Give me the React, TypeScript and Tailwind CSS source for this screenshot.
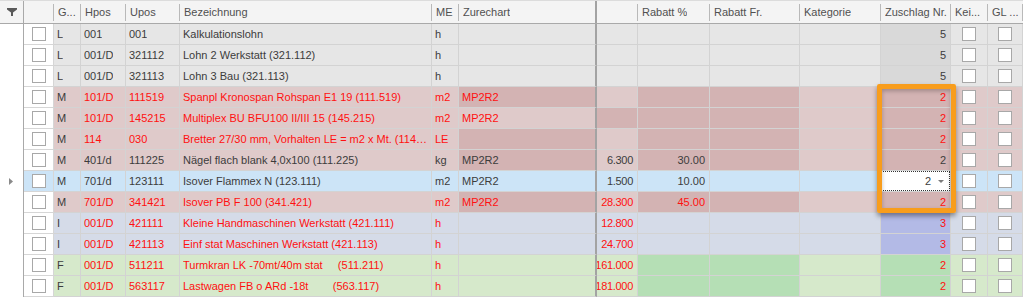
import React from 'react';

type Kind = 'gray' | 'red' | 'sel' | 'lav' | 'green';
type Key = 'g' | 'hpos' | 'upos' | 'bez' | 'me' | 'zur' | 'num' | 'rab' | 'rabfr' | 'kat' | 'zus' | 'kei' | 'gl';

interface Row {
  kind: Kind;
  red?: boolean;
  g: string;
  hpos: string;
  upos: string;
  bez: string;
  me: string;
  zur?: string;
  num?: string;
  rab?: string;
  zus: string;
  dark?: Key[];
  current?: boolean;
}

const columns: { key: Key; label: string; w: string; right?: boolean; check?: boolean }[] = [
  { key: 'g', label: 'G...', w: 'w-[27px]' },
  { key: 'hpos', label: 'Hpos', w: 'w-[45px]' },
  { key: 'upos', label: 'Upos', w: 'w-[54px]' },
  { key: 'bez', label: 'Bezeichnung', w: 'w-[252px]' },
  { key: 'me', label: 'ME', w: 'w-[27px]' },
  { key: 'zur', label: 'Zurechart', w: 'w-[138px]' },
  { key: 'num', label: '', w: 'w-[41px]', right: true },
  { key: 'rab', label: 'Rabatt %', w: 'w-[72px]', right: true },
  { key: 'rabfr', label: 'Rabatt Fr.', w: 'w-[90px]', right: true },
  { key: 'kat', label: 'Kategorie', w: 'w-[81px]' },
  { key: 'zus', label: 'Zuschlag Nr.', w: 'w-[70px]', right: true },
  { key: 'kei', label: 'Kei...', w: 'w-[37px]', check: true },
  { key: 'gl', label: 'GL ...', w: 'w-[35px]', check: true },
];

const palette: Record<Kind, { base: string; dark: string }> = {
  gray: { base: 'bg-[#e6e6e6]', dark: 'bg-[#d9d9d9]' },
  red: { base: 'bg-[#dfcaca]', dark: 'bg-[#d3b3b3]' },
  sel: { base: 'bg-[#cce4f7]', dark: 'bg-[#cce4f7]' },
  lav: { base: 'bg-[#d5dbe8]', dark: 'bg-[#b3bae6]' },
  green: { base: 'bg-[#d6e9cb]', dark: 'bg-[#b5dfb5]' },
};

const defaultDark: Record<Kind, Key[]> = {
  gray: ['zus'],
  red: ['zur', 'rab', 'rabfr', 'zus'],
  sel: [],
  lav: ['zus'],
  green: ['rab', 'rabfr', 'zus'],
};

const rows: Row[] = [
  { kind: 'gray', g: 'L', hpos: '001', upos: '001', bez: 'Kalkulationslohn', me: 'h', zus: '5' },
  { kind: 'gray', g: 'L', hpos: '001/D', upos: '321112', bez: 'Lohn 2 Werkstatt (321.112)', me: 'h', zus: '5' },
  { kind: 'gray', g: 'L', hpos: '001/D', upos: '321113', bez: 'Lohn 3 Bau (321.113)', me: 'h', zus: '5' },
  { kind: 'red', red: true, g: 'M', hpos: '101/D', upos: '111519', bez: 'Spanpl Kronospan Rohspan E1 19 (111.519)', me: 'm2', zur: 'MP2R2', zus: '2' },
  {
    kind: 'red', red: true, g: 'M', hpos: '101/D', upos: '145215', bez: 'Multiplex BU BFU100 II/III 15 (145.215)', me: 'm2', zur: 'MP2R2', zus: '2',
    dark: ['num', 'rab', 'rabfr', 'zus'],
  },
  { kind: 'red', red: true, g: 'M', hpos: '114', upos: '030', bez: 'Bretter 27/30 mm, Vorhalten LE = m2 x Mt. (114.030)', me: 'LE', zus: '2' },
  { kind: 'red', g: 'M', hpos: '401/d', upos: '111225', bez: 'Nägel flach blank 4,0x100 (111.225)', me: 'kg', zur: 'MP2R2', num: '6.300', rab: '30.00', zus: '2' },
  { kind: 'sel', g: 'M', hpos: '701/d', upos: '123111', bez: 'Isover Flammex N (123.111)', me: 'm2', zur: 'MP2R2', num: '1.500', rab: '10.00', zus: '2', current: true },
  { kind: 'red', red: true, g: 'M', hpos: '701/D', upos: '341421', bez: 'Isover PB F 100 (341.421)', me: 'm2', zur: 'MP2R2', num: '28.300', rab: '45.00', zus: '2' },
  { kind: 'lav', red: true, g: 'I', hpos: '001/D', upos: '421111', bez: 'Kleine Handmaschinen Werkstatt (421.111)', me: 'h', num: '12.800', zus: '3' },
  { kind: 'lav', red: true, g: 'I', hpos: '001/D', upos: '421113', bez: 'Einf stat Maschinen Werkstatt (421.113)', me: 'h', num: '24.700', zus: '3' },
  { kind: 'green', red: true, g: 'F', hpos: '001/D', upos: '511211', bez: 'Turmkran LK -70mt/40m stat     (511.211)', me: 'h', num: '161.000', zus: '2' },
  { kind: 'green', red: true, g: 'F', hpos: '001/D', upos: '563117', bez: 'Lastwagen FB o ARd -18t        (563.117)', me: 'h', num: '181.000', zus: '2' },
];

function Check() {
  return <span className="block w-[14px] h-[14px] border border-[#a8a8a8] bg-white" />;
}

function FilterIcon() {
  return (
    <svg width="10" height="8" viewBox="0 0 10 8" className="block">
      <path d="M0 0H10V1.5L6 4.5V8H4V4.5L0 1.5Z" fill="#595959" />
    </svg>
  );
}

function HeaderCell({ label, w, thick }: { label: string; w: string; thick?: boolean }) {
  return (
    <div className={`${w} shrink-0 h-full flex items-center justify-between pl-[4px] text-[#505050]`}>
      <span className="truncate">{label}</span>
      {thick ? (
        <span className="block w-[2px] h-full bg-[#a3a3a3] shrink-0" />
      ) : (
        <span className="block w-px h-[17px] bg-[#b9b9b9] shrink-0" />
      )}
    </div>
  );
}

function cellValue(row: Row, key: Key): string {
  switch (key) {
    case 'g': return row.g;
    case 'hpos': return row.hpos;
    case 'upos': return row.upos;
    case 'bez': return row.bez;
    case 'me': return row.me;
    case 'zur': return row.zur ?? '';
    case 'num': return row.num ?? '';
    case 'rab': return row.rab ?? '';
    case 'zus': return row.zus;
    default: return '';
  }
}

function DataRow({ row }: { row: Row }) {
  const colors = palette[row.kind];
  const dark = row.dark ?? defaultDark[row.kind];
  const checkBg = row.kind === 'sel' ? 'bg-[#cce4f7]' : 'bg-white';

  return (
    <div className="flex h-[21px]">
      {/* Zeilenindikator */}
      <div className="w-[24px] shrink-0 h-full border-r border-[#a9a9a9] bg-white flex items-center justify-center">
        {row.current && (
          <svg width="4" height="7" viewBox="0 0 4 7" className="block ml-[-1px]">
            <path d="M0 0L4 3.5L0 7Z" fill="#8a8a8a" />
          </svg>
        )}
      </div>
      <div className={`w-[30px] shrink-0 h-full border-r border-b border-[#d6d6d6] ${checkBg} flex items-center justify-center pb-[1px]`}>
        <Check />
      </div>
      {columns.map((c) => {
        const bg = dark.includes(c.key) ? colors.dark : colors.base;
        const redText = row.red && c.key !== 'g';
        const color = redText ? 'text-[#ff1010]' : 'text-[#3c3c3c]';
        const border = c.key === 'zur' ? 'border-r-2 border-r-[#a3a3a3]' : 'border-r border-r-[#d3d3d3]';

        if (c.check) {
          return (
            <div key={c.key} className={`${c.w} shrink-0 h-full ${bg} ${border} border-b border-b-[#d3d3d3] flex items-center justify-center`}>
              <Check />
            </div>
          );
        }

        if (c.key === 'zus' && row.current) {
          return (
            <div key={c.key} className={`${c.w} shrink-0 h-full ${border} border-b border-b-[#d3d3d3] flex`}>
              <div className="flex-1 bg-white border border-dotted border-[#333] flex items-center justify-end pr-[5px] gap-[7px] text-[#3c3c3c]">
                <span>2</span>
                <svg width="6" height="3" viewBox="0 0 6 3" className="block mt-[1px]">
                  <path d="M0 0H6L3 3Z" fill="#7a7a7a" />
                </svg>
              </div>
            </div>
          );
        }

        return (
          <div
            key={c.key}
            className={`${c.w} shrink-0 h-full ${bg} ${border} border-b border-b-[#d3d3d3] ${color} flex items-center overflow-hidden ${
              c.right ? 'justify-end pr-[4px]' : 'pl-[3px] pr-[2px]'
            }`}
          >
            <span
              className={
                c.key === 'num'
                  ? 'whitespace-nowrap tracking-[-0.3px]'
                  : c.right
                    ? 'whitespace-nowrap'
                    : 'truncate whitespace-pre'
              }
            >
              {cellValue(row, c.key)}
            </span>
          </div>
        );
      })}
    </div>
  );
}

export default function App() {
  return (
    <div className="relative w-[1023px] h-[297px] overflow-hidden bg-white font-['Liberation_Sans',Arial,sans-serif] text-[11px] leading-[13px]">
      {/* Kopfzeile */}
      <div className="flex h-[24px] border-t border-t-[#dcdcdc] border-b border-b-[#a9a9a9] bg-[#f4f4f4]">
        <div className="w-[24px] shrink-0 h-full border-r border-[#a9a9a9] flex items-center justify-center">
          <FilterIcon />
        </div>
        <HeaderCell label="" w="w-[30px]" />
        {columns.map((c) => (
          <HeaderCell key={c.key} label={c.label} w={c.w} thick={c.key === 'zur'} />
        ))}
      </div>

      {rows.map((row, i) => (
        <DataRow key={i} row={row} />
      ))}

      {/* Markierung Zuschlag Nr. */}
      <div className="pointer-events-none absolute left-[877px] top-[84px] w-[79px] h-[129px] border-[5px] border-[#f89d1c] rounded-[2px] shadow-[0_3px_5px_rgba(0,0,0,0.4),inset_0_2px_4px_rgba(0,0,0,0.25)]" />
    </div>
  );
}
